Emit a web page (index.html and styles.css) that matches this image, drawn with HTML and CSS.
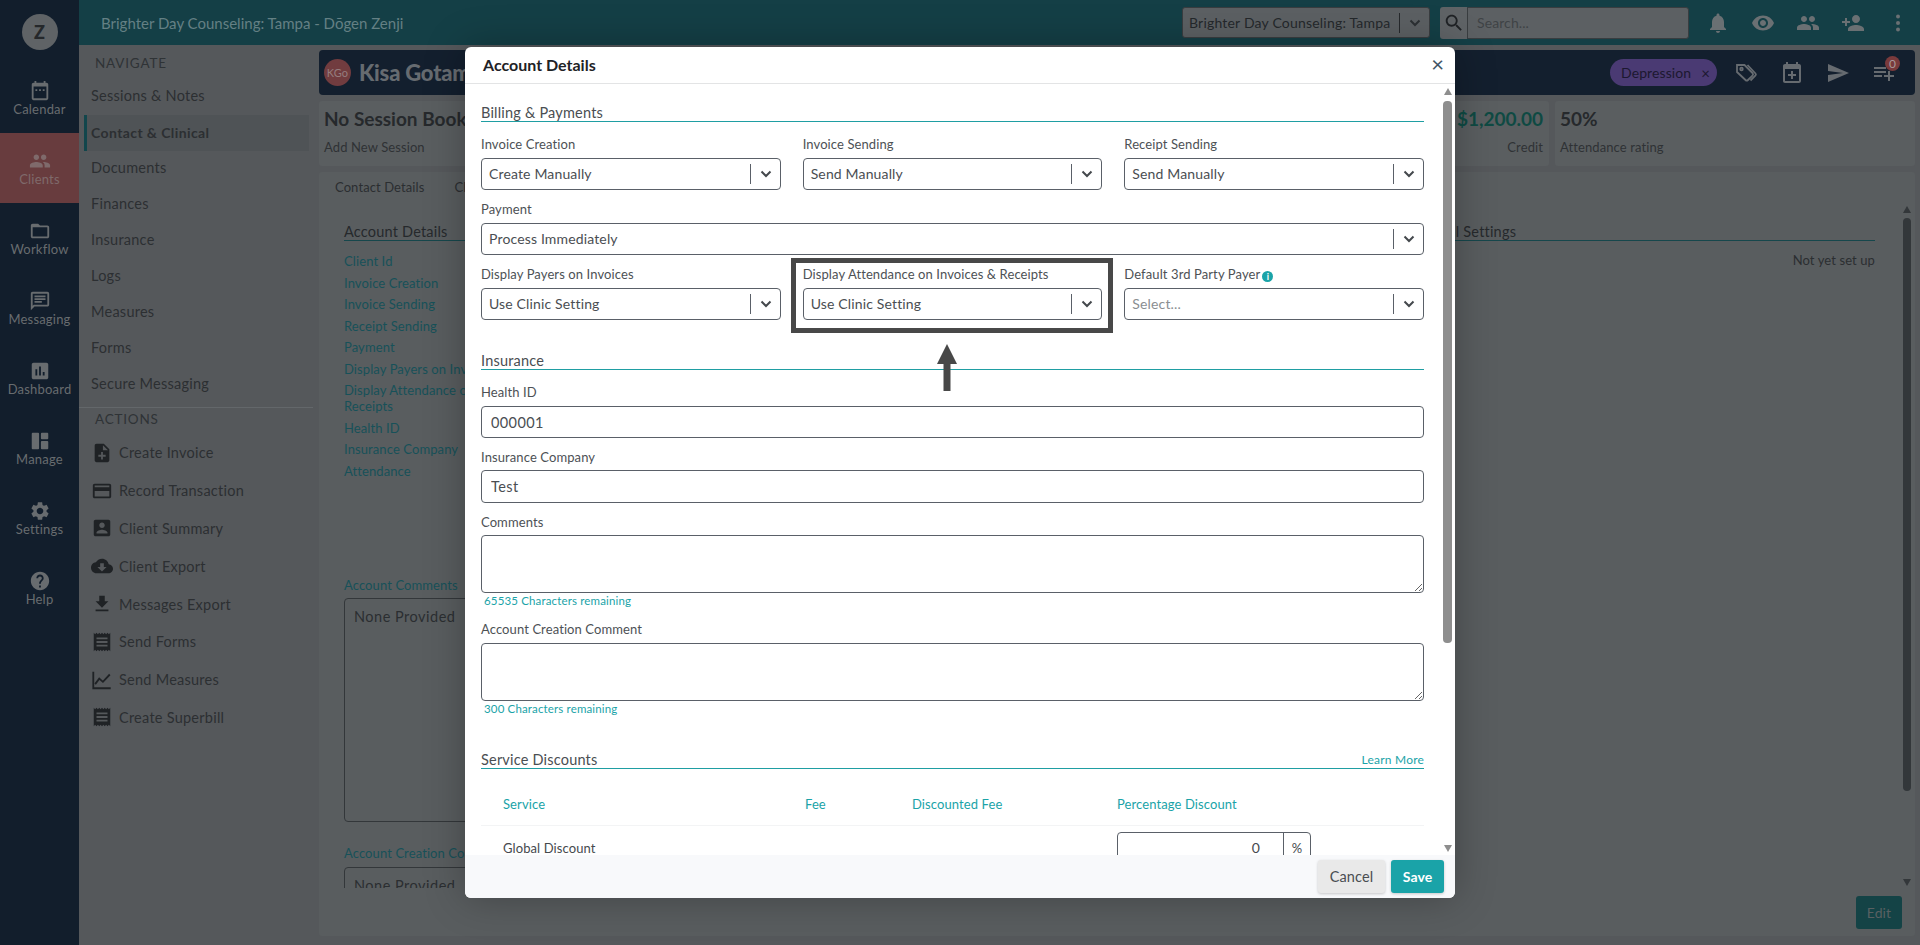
FILE: index.html
```html
<!DOCTYPE html>
<html lang="en">
<head>
<meta charset="utf-8">
<title>Account Details</title>
<link rel="stylesheet" href="styles.css">
</head>
<body>
<div class="app">
  <aside class="rail">
    <div class="rail-avatar-wrap"><div class="rail-avatar">Z</div></div>
    <a class="rail-item"><svg viewBox="0 0 24 24"><path d="M19 3h-1V1h-2v2H8V1H6v2H5c-1.1 0-2 .9-2 2v15c0 1.1.9 2 2 2h14c1.1 0 2-.9 2-2V5c0-1.1-.9-2-2-2zm0 17H5V7h14v13z"/><path d="M7 10h2v2H7zm4 0h2v2h-2zm4 0h2v2h-2z"/></svg><span>Calendar</span></a>
    <a class="rail-item rail-item-active"><svg viewBox="0 0 24 24"><path d="M16 11c1.66 0 2.99-1.34 2.99-3S17.66 5 16 5c-1.66 0-3 1.34-3 3s1.34 3 3 3zm-8 0c1.66 0 2.99-1.34 2.99-3S9.66 5 8 5C6.34 5 5 6.34 5 8s1.34 3 3 3zm0 2c-2.33 0-7 1.17-7 3.5V19h14v-2.5c0-2.33-4.67-3.5-7-3.5zm8 0c-.29 0-.62.02-.97.05 1.16.84 1.97 1.97 1.97 3.45V19h6v-2.5c0-2.33-4.67-3.5-7-3.5z"/></svg><span>Clients</span></a>
    <a class="rail-item"><svg viewBox="0 0 24 24"><path d="M20 6h-8l-2-2H4c-1.1 0-1.99.9-1.99 2L2 18c0 1.1.9 2 2 2h16c1.1 0 2-.9 2-2V8c0-1.1-.9-2-2-2zm0 12H4V8h16v10z"/></svg><span>Workflow</span></a>
    <a class="rail-item"><svg viewBox="0 0 24 24"><path d="M20 2H4c-1.1 0-1.99.9-1.99 2L2 22l4-4h14c1.1 0 2-.9 2-2V4c0-1.1-.9-2-2-2zm0 14H5.17L4 17.17V4h16v12zM6 12h8v2H6zm0-3h12v2H6zm0-3h12v2H6z"/></svg><span>Messaging</span></a>
    <a class="rail-item"><svg viewBox="0 0 24 24"><path d="M19 3H5c-1.1 0-2 .9-2 2v14c0 1.1.9 2 2 2h14c1.1 0 2-.9 2-2V5c0-1.1-.9-2-2-2zM9 17H7v-7h2v7zm4 0h-2V7h2v10zm4 0h-2v-4h2v4z"/></svg><span>Dashboard</span></a>
    <a class="rail-item"><svg viewBox="0 0 24 24"><path d="M4 3h6a1 1 0 0 1 1 1v16a1 1 0 0 1-1 1H4a1 1 0 0 1-1-1V4a1 1 0 0 1 1-1zm10 0h6a1 1 0 0 1 1 1v5a1 1 0 0 1-1 1h-6a1 1 0 0 1-1-1V4a1 1 0 0 1 1-1zm0 9h6a1 1 0 0 1 1 1v7a1 1 0 0 1-1 1h-6a1 1 0 0 1-1-1v-7a1 1 0 0 1 1-1z"/></svg><span>Manage</span></a>
    <a class="rail-item"><svg viewBox="0 0 24 24"><path d="M19.14 12.94c.04-.3.06-.61.06-.94 0-.32-.02-.64-.07-.94l2.03-1.58c.18-.14.23-.41.12-.61l-1.92-3.32c-.12-.22-.37-.29-.59-.22l-2.39.96c-.5-.38-1.03-.7-1.62-.94l-.36-2.54c-.04-.24-.24-.41-.48-.41h-3.84c-.24 0-.43.17-.47.41l-.36 2.54c-.59.24-1.13.57-1.62.94l-2.39-.96c-.22-.08-.47 0-.59.22L2.74 8.87c-.12.21-.08.47.12.61l2.03 1.58c-.05.3-.09.63-.09.94s.02.64.07.94l-2.03 1.58c-.18.14-.23.41-.12.61l1.92 3.32c.12.22.37.29.59.22l2.39-.96c.5.38 1.03.7 1.62.94l.36 2.54c.05.24.24.41.48.41h3.84c.24 0 .44-.17.47-.41l.36-2.54c.59-.24 1.13-.56 1.62-.94l2.39.96c.22.08.47 0 .59-.22l1.92-3.32c.12-.22.07-.47-.12-.61l-2.01-1.58zM12 15.6c-1.98 0-3.6-1.62-3.6-3.6s1.62-3.6 3.6-3.6 3.6 1.62 3.6 3.6-1.62 3.6-3.6 3.6z"/></svg><span>Settings</span></a>
    <a class="rail-item"><svg viewBox="0 0 24 24"><path d="M12 2C6.48 2 2 6.48 2 12s4.48 10 10 10 10-4.48 10-10S17.52 2 12 2zm1 17h-2v-2h2v2zm2.07-7.75l-.9.92C13.45 12.9 13 13.5 13 15h-2v-.5c0-1.1.45-2.1 1.17-2.83l1.24-1.26c.37-.36.59-.86.59-1.41 0-1.1-.9-2-2-2s-2 .9-2 2H8c0-2.21 1.79-4 4-4s4 1.79 4 4c0 .88-.36 1.68-.93 2.25z"/></svg><span>Help</span></a>
  </aside>

  <div class="shell">
    <header class="topbar">
      <div class="topbar-title">Brighter Day Counseling: Tampa - Dōgen Zenji</div>
      <div class="top-select"><span class="top-select-value">Brighter Day Counseling: Tampa</span><span class="top-select-sep"></span><svg class="chev chev-dim" viewBox="0 0 12 8"><path d="M1.5 1.5 6 6l4.5-4.5"/></svg></div>
      <div class="top-search">
        <span class="top-search-btn"><svg viewBox="0 0 24 24"><path d="M15.5 14h-.79l-.28-.27C15.41 12.59 16 11.11 16 9.5 16 5.91 13.09 3 9.5 3S3 5.91 3 9.5 5.91 16 9.5 16c1.61 0 3.09-.59 4.23-1.57l.27.28v.79l5 4.99L20.49 19l-4.99-5zm-6 0C7.01 14 5 11.99 5 9.5S7.01 5 9.5 5 14 7.01 14 9.5 11.99 14 9.5 14z"/></svg></span>
        <span class="top-search-input">Search...</span>
      </div>
      <div class="top-icons">
        <svg viewBox="0 0 24 24"><path d="M12 22c1.1 0 2-.9 2-2h-4c0 1.1.89 2 2 2zm6-6v-5c0-3.07-1.64-5.64-4.5-6.32V4c0-.83-.67-1.5-1.5-1.5s-1.5.67-1.5 1.5v.68C7.63 5.36 6 7.92 6 11v5l-2 2v1h16v-1l-2-2z"/></svg>
        <svg viewBox="0 0 24 24"><path d="M12 4.5C7 4.5 2.73 7.61 1 12c1.73 4.39 6 7.5 11 7.5s9.27-3.11 11-7.5c-1.73-4.39-6-7.5-11-7.5zM12 17c-2.76 0-5-2.24-5-5s2.24-5 5-5 5 2.24 5 5-2.24 5-5 5zm0-8c-1.66 0-3 1.34-3 3s1.34 3 3 3 3-1.34 3-3-1.34-3-3-3z"/></svg>
        <svg viewBox="0 0 24 24"><path d="M16 11c1.66 0 2.99-1.34 2.99-3S17.66 5 16 5c-1.66 0-3 1.34-3 3s1.34 3 3 3zm-8 0c1.66 0 2.99-1.34 2.99-3S9.66 5 8 5C6.34 5 5 6.34 5 8s1.34 3 3 3zm0 2c-2.33 0-7 1.17-7 3.5V19h14v-2.5c0-2.33-4.67-3.5-7-3.5zm8 0c-.29 0-.62.02-.97.05 1.16.84 1.97 1.97 1.97 3.45V19h6v-2.5c0-2.33-4.67-3.5-7-3.5z"/></svg>
        <svg viewBox="0 0 24 24"><path d="M15 12c2.21 0 4-1.79 4-4s-1.79-4-4-4-4 1.79-4 4 1.79 4 4 4zm-9-2V7H4v3H1v2h3v3h2v-3h3v-2H6zm9 4c-2.67 0-8 1.34-8 4v2h16v-2c0-2.66-5.33-4-8-4z"/></svg>
        <svg viewBox="0 0 24 24"><circle cx="12" cy="5.5" r="2"/><circle cx="12" cy="12" r="2"/><circle cx="12" cy="18.5" r="2"/></svg>
      </div>
    </header>

    <div class="content">
      <nav class="subnav">
        <div class="subnav-head">NAVIGATE</div>
        <ul class="subnav-list">
          <li class="subnav-link">Sessions &amp; Notes</li>
          <li class="subnav-link subnav-link-active">Contact &amp; Clinical</li>
          <li class="subnav-link">Documents</li>
          <li class="subnav-link">Finances</li>
          <li class="subnav-link">Insurance</li>
          <li class="subnav-link">Logs</li>
          <li class="subnav-link">Measures</li>
          <li class="subnav-link">Forms</li>
          <li class="subnav-link">Secure Messaging</li>
        </ul>
        <div class="subnav-divider"></div>
        <div class="subnav-head">ACTIONS</div>
        <ul class="action-list">
          <li class="action"><svg viewBox="0 0 24 24"><path d="M14 2H6c-1.1 0-1.99.9-1.99 2L4 20c0 1.1.89 2 1.99 2H18c1.1 0 2-.9 2-2V8l-6-6zm2 14h-3v3h-2v-3H8v-2h3v-3h2v3h3v2zm-3-7V3.5L18.5 9H13z"/></svg>Create Invoice</li>
          <li class="action"><svg viewBox="0 0 24 24"><path d="M20 4H4c-1.11 0-1.99.89-1.99 2L2 18c0 1.11.89 2 2 2h16c1.11 0 2-.89 2-2V6c0-1.11-.89-2-2-2zm0 14H4v-6h16v6zm0-10H4V6h16v2z"/></svg>Record Transaction</li>
          <li class="action"><svg viewBox="0 0 24 24"><path d="M3 5v14c0 1.1.89 2 2 2h14c1.1 0 2-.9 2-2V5c0-1.1-.9-2-2-2H5c-1.11 0-2 .9-2 2zm12 4c0 1.66-1.34 3-3 3s-3-1.34-3-3 1.34-3 3-3 3 1.34 3 3zm-9 8c0-2 4-3.1 6-3.1s6 1.1 6 3.1v1H6v-1z"/></svg>Client Summary</li>
          <li class="action"><svg viewBox="0 0 24 24"><path d="M19.35 10.04C18.67 6.59 15.64 4 12 4 9.11 4 6.6 5.64 5.35 8.04 2.34 8.36 0 10.91 0 14c0 3.31 2.69 6 6 6h13c2.76 0 5-2.24 5-5 0-2.64-2.05-4.78-4.65-4.96zM17 13l-5 5-5-5h3V9h4v4h3z"/></svg>Client Export</li>
          <li class="action"><svg viewBox="0 0 24 24"><path d="M19 9h-4V3H9v6H5l7 7 7-7zM5 18v2h14v-2H5z"/></svg>Messages Export</li>
          <li class="action"><svg viewBox="0 0 24 24"><path d="M18 17H6v-2h12v2zm0-4H6v-2h12v2zm0-4H6V7h12v2zM3 22l1.5-1.5L6 22l1.5-1.5L9 22l1.5-1.5L12 22l1.5-1.5L15 22l1.5-1.5L18 22l1.5-1.5L21 22V2l-1.5 1.5L18 2l-1.5 1.5L15 2l-1.5 1.5L12 2l-1.5 1.5L9 2 7.5 3.5 6 2 4.5 3.5 3 2v20z"/></svg>Send Forms</li>
          <li class="action"><svg class="action-stroke" viewBox="0 0 24 24"><path d="M2.5 3v18h19"/><path d="M4.5 16.5 9 10.5l4 3.5 7.5-8"/></svg>Send Measures</li>
          <li class="action"><svg viewBox="0 0 24 24"><path d="M18 17H6v-2h12v2zm0-4H6v-2h12v2zm0-4H6V7h12v2zM3 22l1.5-1.5L6 22l1.5-1.5L9 22l1.5-1.5L12 22l1.5-1.5L15 22l1.5-1.5L18 22l1.5-1.5L21 22V2l-1.5 1.5L18 2l-1.5 1.5L15 2l-1.5 1.5L12 2l-1.5 1.5L9 2 7.5 3.5 6 2 4.5 3.5 3 2v20z"/></svg>Create Superbill</li>
        </ul>
      </nav>

      <main class="main">
        <section class="client-bar">
          <div class="client-avatar">KGo</div>
          <div class="client-name">Kisa Gotami</div>
          <div class="client-tools">
            <span class="chip">Depression<span class="chip-x">×</span></span>
            <svg class="tool tool-line" viewBox="0 0 24 24"><path d="M3 4h7.5l8 8a1.8 1.8 0 0 1 0 2.5l-4.5 4.5a1.8 1.8 0 0 1-2.5 0l-8.5-8z"/><circle cx="7.5" cy="8" r="1.3"/><path d="M13.5 4l8 8.5a1.5 1.5 0 0 1 0 2l-5 5"/></svg>
            <svg class="tool" viewBox="0 0 24 24"><path d="M19 3h-1V1h-2v2H8V1H6v2H5c-1.11 0-2 .9-2 2v15c0 1.1.89 2 2 2h14c1.1 0 2-.9 2-2V5c0-1.1-.9-2-2-2zm0 17H5V8h14v12z"/><path d="M13 10h-2v3H8v2h3v3h2v-3h3v-2h-3z"/></svg>
            <svg class="tool" viewBox="0 0 24 24"><path d="M2.01 21 23 12 2.01 3 2 10l15 2-15 2z"/></svg>
            <span class="tool-badged">
              <svg class="tool" viewBox="0 0 24 24"><path d="M14 10H2v2h12v-2zm0-4H2v2h12V6zm4 8v-4h-2v4h-4v2h4v4h2v-4h4v-2h-4zM2 16h8v-2H2v2z"/></svg>
              <span class="badge">0</span>
            </span>
          </div>
        </section>

        <section class="stats">
          <div class="stat stat-wide">
            <div>
              <div class="stat-value">No Session Booked</div>
              <div class="stat-label">Add New Session</div>
            </div>
            <div class="stat-end">
              <div class="stat-value stat-value-money">$1,200.00</div>
              <div class="stat-label">Credit</div>
            </div>
          </div>
          <div class="stat stat-rating">
            <div>
              <div class="stat-value">50%</div>
              <div class="stat-label">Attendance rating</div>
            </div>
          </div>
        </section>

        <section class="card">
          <div class="tabs"><span>Contact Details</span><span>Clinical Details</span></div>
          <div class="card-body">
            <div>
              <h3 class="bg-title">Account Details</h3>
              <ul class="detail-list">
                <li>Client Id</li>
                <li>Invoice Creation</li>
                <li>Invoice Sending</li>
                <li>Receipt Sending</li>
                <li>Payment</li>
                <li>Display Payers on Invoices</li>
                <li>Display Attendance on Invoices &amp; Receipts</li>
                <li>Health ID</li>
                <li>Insurance Company</li>
                <li>Attendance</li>
              </ul>
              <div class="bg-label bg-label-comments">Account Comments</div>
              <div class="bg-box bg-box-tall">None Provided</div>
              <div class="bg-label bg-label-creation">Account Creation Comment</div>
              <div class="bg-box">None Provided</div>
            </div>
            <div>
              <h3 class="bg-title">Client Portal Settings</h3>
              <div class="bg-note">Not yet set up</div>
            </div>
          </div>
          <div class="card-foot"><button class="edit-btn" type="button">Edit</button></div>
          <div class="bg-scroll"><i class="arrow-up"></i><b></b><i class="arrow-down"></i></div>
        </section>
      </main>
    </div>
  </div>
</div>

<div class="modal">
  <div class="modal-head">
    <h2>Account Details</h2>
    <span class="modal-close">×</span>
  </div>
  <div class="modal-body">
    <h3 class="section-title">Billing &amp; Payments</h3>
    <div class="grid-3">
      <div class="field">
        <label>Invoice Creation</label>
        <div class="select"><span class="select-value">Create Manually</span><span class="select-sep"></span><svg class="chev" viewBox="0 0 12 8"><path d="M1.5 1.5 6 6l4.5-4.5"/></svg></div>
      </div>
      <div class="field">
        <label>Invoice Sending</label>
        <div class="select"><span class="select-value">Send Manually</span><span class="select-sep"></span><svg class="chev" viewBox="0 0 12 8"><path d="M1.5 1.5 6 6l4.5-4.5"/></svg></div>
      </div>
      <div class="field">
        <label>Receipt Sending</label>
        <div class="select"><span class="select-value">Send Manually</span><span class="select-sep"></span><svg class="chev" viewBox="0 0 12 8"><path d="M1.5 1.5 6 6l4.5-4.5"/></svg></div>
      </div>
    </div>
    <div class="field">
      <label>Payment</label>
      <div class="select"><span class="select-value">Process Immediately</span><span class="select-sep"></span><svg class="chev" viewBox="0 0 12 8"><path d="M1.5 1.5 6 6l4.5-4.5"/></svg></div>
    </div>
    <div class="grid-3">
      <div class="field">
        <label>Display Payers on Invoices</label>
        <div class="select"><span class="select-value">Use Clinic Setting</span><span class="select-sep"></span><svg class="chev" viewBox="0 0 12 8"><path d="M1.5 1.5 6 6l4.5-4.5"/></svg></div>
      </div>
      <div class="field">
        <label>Display Attendance on Invoices &amp; Receipts</label>
        <div class="select"><span class="select-value">Use Clinic Setting</span><span class="select-sep"></span><svg class="chev" viewBox="0 0 12 8"><path d="M1.5 1.5 6 6l4.5-4.5"/></svg></div>
      </div>
      <div class="field">
        <label>Default 3rd Party Payer<span class="info">i</span></label>
        <div class="select"><span class="select-value select-placeholder">Select...</span><span class="select-sep"></span><svg class="chev" viewBox="0 0 12 8"><path d="M1.5 1.5 6 6l4.5-4.5"/></svg></div>
      </div>
    </div>

    <h3 class="section-title section-title-insurance">Insurance</h3>
    <div class="field">
      <label>Health ID</label>
      <input class="text-input" type="text" value="000001">
    </div>
    <div class="field field-tight">
      <label>Insurance Company</label>
      <input class="text-input text-input-tall" type="text" value="Test">
    </div>
    <div class="field field-tight">
      <label>Comments</label>
      <textarea class="text-area"></textarea>
      <div class="remaining">65535 Characters remaining</div>
    </div>
    <div class="field field-after-note">
      <label>Account Creation Comment</label>
      <textarea class="text-area"></textarea>
      <div class="remaining">300 Characters remaining</div>
    </div>

    <div class="section-title section-title-discounts">
      <h3>Service Discounts</h3>
      <a class="learn-more">Learn More</a>
    </div>
    <div class="discount-row discount-head">
      <span>Service</span><span>Fee</span><span>Discounted Fee</span><span>Percentage Discount</span>
    </div>
    <div class="discount-row discount-item">
      <span>Global Discount</span><span></span><span></span>
      <div class="percent"><span class="percent-value">0</span><span class="percent-unit">%</span></div>
    </div>
  </div>
  <div class="modal-foot">
    <button class="btn btn-cancel" type="button">Cancel</button>
    <button class="btn btn-save" type="button">Save</button>
  </div>
  <div class="modal-scroll"><i class="arrow-up"></i><b></b><i class="arrow-down"></i></div>
  <div class="highlight"></div>
  <svg class="pointer" viewBox="0 0 20 47"><path d="M10 0 20 20H13.5V47H6.5V20H0z"/></svg>
</div>
</body>
</html>
```

FILE: styles.css
```css
* { box-sizing: border-box; }
html, body { margin: 0; height: 100%; overflow: hidden; }
body {
  font-family: "Lato", "Liberation Sans", sans-serif;
  font-size: 14px;
  letter-spacing: .1px;
  color: #2d3033;
  background: #55585b;
}
h2, h3, ul { margin: 0; padding: 0; font-weight: 400; }
ul { list-style: none; }
button { font: inherit; letter-spacing: inherit; border: 0; cursor: pointer; }

.app { display: flex; height: 945px; }

/* rail */
.rail { flex: 0 0 79px; background: #121e2c; }
.rail-avatar-wrap { height: 63px; padding-top: 14px; }
.rail-avatar {
  width: 36px; height: 36px; margin: 0 auto; border-radius: 50%;
  background: #5f6366; color: #25282b;
  font-size: 18px; font-weight: 900; line-height: 36px; text-align: center;
}
.rail-item {
  display: flex; flex-direction: column; align-items: center;
  height: 70px; padding-top: 17px;
  color: #686c6f; font-size: 13px; line-height: 16px; letter-spacing: .2px;
}
.rail-item svg { width: 22px; height: 22px; fill: #686c6f; margin-bottom: -1px; }
.rail-item-active { background: #683c3e; color: #7f6a6b; }
.rail-item-active svg { fill: #7f6a6b; }

.shell { flex: 1; min-width: 0; display: flex; flex-direction: column; }

/* topbar */
.topbar { flex: 0 0 45px; display: flex; align-items: center; background: #143f46; padding-left: 22px; }
.topbar-title { flex: 1; font-size: 15px; letter-spacing: 0; color: #648084; }
.top-select {
  display: flex; align-items: center; width: 248px; height: 31px; margin-right: 10px;
  background: #5c6063; border: 1px solid #393d40; border-radius: 3px; padding-left: 6px;
}
.top-select-value { flex: 1; font-size: 14px; letter-spacing: .2px; color: #24282b; white-space: nowrap; }
.top-select-sep { width: 1px; height: 20px; background: #26292c; }
.chev { flex: none; width: 12px; height: 8px; margin: 0 8px 0 9px; fill: none; stroke: #44484c; stroke-width: 2; }
.chev-dim { stroke: #2c3033; }
.top-search { display: flex; height: 32px; margin-right: 17px; }
.top-search-btn {
  width: 27px; background: #5f6366; border-radius: 3px 0 0 3px;
  display: flex; align-items: center; justify-content: center;
}
.top-search-btn svg { width: 22px; height: 22px; fill: #1f2225; }
.top-search-input {
  width: 222px; background: #5c6063; border: 1px solid #393d40; border-radius: 0 3px 3px 0;
  padding: 6px 9px; font-size: 14px; color: #3f4346;
}
.top-icons { display: flex; align-items: center; gap: 21px; padding-right: 10px; }
.top-icons svg { width: 24px; height: 24px; fill: #6a7073; }

/* subnav */
.content { flex: 1; display: flex; min-height: 0; }
.subnav { flex: 0 0 240px; padding-top: 9px; }
.subnav-head { height: 18px; line-height: 18px; padding-left: 16px; font-size: 13.5px; letter-spacing: .8px; color: #2f3336; }
.subnav-list { margin: 7px 0 4px 5px; width: 225px; }
.subnav-link {
  height: 36px; line-height: 34px; padding-left: 7px;
  font-size: 14.5px; letter-spacing: .25px; color: #2c2f32;
}
.subnav-link-active {
  line-height: 36px;
  background: #4f5356; border-left: 3px solid #12464c; padding-left: 4px;
  font-weight: 700; font-size: 14px; letter-spacing: .4px;
}
.subnav-divider { width: 234px; border-top: 1px solid #63676a; margin-bottom: 2px; }
.action-list { margin-top: 6px; }
.action {
  display: flex; align-items: center; height: 37.8px; padding-left: 12px; gap: 6px;
  font-size: 14.5px; letter-spacing: .25px; color: #2c2f32;
}
.action svg { flex: none; width: 22px; height: 22px; fill: #1f2225; }
.action .action-stroke { fill: none; stroke: #1f2225; stroke-width: 2; }

/* main */
.main { flex: 1; min-width: 0; display: flex; flex-direction: column; padding: 5px 5px 9px 0; gap: 6px; }
.client-bar {
  flex: 0 0 45px; display: flex; align-items: center; padding: 0 19px 0 5px;
  background: #131f2e; border-radius: 4px;
}
.client-avatar {
  width: 27px; height: 27px; border-radius: 50%; background: #713c3f; color: #957d7e;
  font-size: 11px; line-height: 27px; text-align: center;
}
.client-name { flex: 1; margin-left: 8px; font-size: 22px; font-weight: 900; color: #666b70; letter-spacing: -.2px; }
.client-tools { display: flex; align-items: center; }
.chip {
  display: flex; align-items: center; justify-content: space-between;
  width: 107px; height: 27px; padding: 0 7px 0 11px; margin-right: 17px;
  border-radius: 14px; background: #4a3a73; color: #1c1830; font-size: 14px;
}
.chip-x { font-size: 15px; }
.tool { width: 24px; height: 24px; fill: #666b70; margin-right: 22px; display: block; }
.tool-line { fill: none; stroke: #666b70; stroke-width: 1.8; }
.tool-badged { position: relative; }
.tool-badged .tool { margin-right: 0; }
.badge {
  position: absolute; left: 13px; top: -5px; width: 15px; height: 15px; border-radius: 50%;
  background: #7a3a3c; color: #a89899; font-size: 12px; line-height: 15px; text-align: center; letter-spacing: 0;
}

.stats { flex: 0 0 65px; display: flex; gap: 6px; }
.stat { padding: 3px 6px 0 5px; background: #5a5e60; border-radius: 3px; }
.stat-wide { flex: 1; display: flex; justify-content: space-between; }
.stat-rating { flex: 0 0 360px; }
.stat-value { font-size: 19px; line-height: 30px; font-weight: 700; color: #26292c; letter-spacing: 0; }
.stat-value-money { color: #0f4a43; }
.stat-label { font-size: 13px; line-height: 20px; margin-top: 3px; color: #2f3235; }
.stat-end { text-align: right; }

.card {
  position: relative; flex: 1; min-height: 0; display: flex; flex-direction: column;
  background: #595d5f; border-radius: 3px;
}
.tabs { display: flex; gap: 30px; padding: 6px 0 0 16px; height: 24px; font-size: 13px; line-height: 18px; color: #2b2e31; }
.card-body { flex: 1; min-height: 0; overflow: hidden; display: grid; grid-template-columns: 1fr 497px; gap: 20px; padding: 27px 40px 0 25px; }
.bg-title { height: 18px; line-height: 18px; font-size: 14.5px; letter-spacing: .2px; color: #26292c; border-bottom: 1px solid #16474c; }
.detail-list { width: 200px; margin-top: 12px; }
.detail-list li { width: fit-content; font-size: 13px; line-height: 16px; margin-bottom: 5.5px; color: #175159; }
.bg-label { font-size: 13px; line-height: 16px; color: #175159; margin-bottom: 5px; }
.bg-label-comments { margin-top: 98px; }
.bg-label-creation { margin-top: 23px; margin-bottom: 6px; }
.bg-box { height: 100px; border: 1px solid #33373a; border-radius: 4px; padding: 9px; font-size: 14.5px; line-height: 18px; letter-spacing: .5px; color: #2b2e31; }
.bg-box-tall { height: 224px; }
.bg-note { margin-top: 10px; text-align: right; font-size: 13px; line-height: 18px; color: #2b2e31; }
.card-foot { flex: 0 0 48px; display: flex; justify-content: flex-end; padding: 8px 13px 0 0; }
.edit-btn { width: 46px; height: 33px; border-radius: 3px; background: #144346; color: #596062; font-size: 14px; }
.bg-scroll { position: absolute; right: 4px; top: 34px; bottom: 50px; width: 8px; display: flex; flex-direction: column; align-items: center; }
.bg-scroll b { flex: 1; width: 8px; margin: 5px 0 88px; background: #33373a; border-radius: 4px; }
.bg-scroll .arrow-up { border-bottom-color: #33373a; }
.bg-scroll .arrow-down { border-top-color: #33373a; }
.arrow-up, .arrow-down { flex: none; width: 0; height: 0; border-left: 4.5px solid transparent; border-right: 4.5px solid transparent; }
.arrow-up { border-bottom: 7px solid #8e8e8e; }
.arrow-down { border-top: 7px solid #8e8e8e; }

/* modal */
.modal {
  position: absolute; left: 465px; top: 47px; width: 990px; height: 851px;
  display: flex; flex-direction: column; overflow: hidden;
  background: #fff; border-radius: 6px;
  box-shadow: 0 0 40px rgba(0,0,0,.28);
  color: #45494d;
}
.modal-head { flex: 0 0 37px; display: flex; align-items: center; justify-content: space-between; padding: 0 11px 2px 18px; border-bottom: 1px solid #e3e4e5; }
.modal-head h2 { font-size: 16px; font-weight: 700; letter-spacing: 0; color: #1e2226; }
.modal-close { font-size: 22px; line-height: 24px; color: #3f5566; }
.modal-body { flex: 1; min-height: 0; overflow: hidden; padding: 18px 31px 0 16px; }
.section-title { height: 20px; font-size: 14.5px; line-height: 21px; letter-spacing: .2px; color: #4a4e52; border-bottom: 1px solid #1f9ea3; margin-bottom: 3px; }
.section-title-insurance { margin-top: 30px; }
.section-title-discounts { display: flex; justify-content: space-between; margin-top: 32px; margin-bottom: 0; }
.section-title-discounts h3 { font-size: 14.5px; }
.learn-more { font-size: 12px; color: #1aa3a8; letter-spacing: .2px; line-height: 21px; }
.grid-3 { display: grid; grid-template-columns: repeat(3, 1fr); gap: 22px; }
.field { padding-top: 10px; min-width: 0; }
.field label { display: block; height: 18px; margin-bottom: 5px; font-size: 13px; line-height: 18px; letter-spacing: .1px; color: #4d5155; white-space: nowrap; }
.field-tight label { margin-bottom: 4px; }
.field-after-note { padding-top: 11px; }
.select {
  display: flex; align-items: center; height: 32px; padding-left: 7px;
  border: 1px solid #5a6068; border-radius: 4px; background: #fff;
}
.select-value { flex: 1; padding-bottom: 2px; font-size: 14px; letter-spacing: .15px; color: #4a4e52; white-space: nowrap; }
.select-placeholder { color: #8a8e92; }
.select-sep { width: 1px; height: 20px; background: #5a6068; }
.info {
  display: inline-block; width: 11px; height: 11px; margin-left: 2px; vertical-align: -1px;
  border-radius: 50%; background: #1aa3a8; color: #fff;
  font-size: 9px; font-weight: 700; line-height: 11px; text-align: center; letter-spacing: 0;
}
.text-input, .text-area {
  display: block; width: 100%; margin: 0; border: 1px solid #5a6068; border-radius: 4px; background: #fff;
  font: inherit; font-size: 14.5px; letter-spacing: .4px; color: #4a4e52; outline: 0;
}
.text-input { height: 32px; padding: 0 9px; }
.text-input-tall { height: 33px; }
.text-area { height: 58px; }
.remaining { height: 16px; padding-left: 3px; font-size: 11.5px; line-height: 16px; letter-spacing: .15px; color: #1aa3a8; }
.discount-row { display: grid; grid-template-columns: 302px 107px 205px 194px; padding-left: 22px; }
.discount-head { height: 57px; padding-top: 26px; border-bottom: 1px solid #f3f4f5; font-size: 13px; line-height: 18px; color: #1aa3a8; }
.discount-item { padding-top: 6px; font-size: 13px; }
.discount-item > span { line-height: 32px; color: #45494d; }
.percent { display: flex; height: 32px; border: 1px solid #5a6068; border-radius: 4px; }
.percent-value { flex: 1; padding-right: 23px; text-align: right; font-size: 14px; line-height: 30px; }
.percent-unit { width: 27px; border-left: 1px solid #5a6068; text-align: center; font-size: 13px; line-height: 30px; }
.modal-foot { flex: 0 0 43px; display: flex; justify-content: flex-end; align-items: center; gap: 6px; padding-right: 11px; background: #f8f9fb; }
.btn { height: 33px; border-radius: 3px; font-size: 14.5px; box-shadow: 0 1px 3px rgba(0,0,0,.2); }
.btn-cancel { width: 67px; background: #e9e9e9; color: #4a4e52; }
.btn-save { width: 53px; background: #1aa3a8; color: #fff; font-weight: 700; font-size: 14px; }
.modal-scroll { position: absolute; left: 978px; top: 41px; width: 9px; height: 764px; display: flex; flex-direction: column; align-items: center; }
.modal-scroll b { width: 9px; height: 542px; margin-top: 6px; background: #8e8e8e; border-radius: 4px; }
.modal-scroll .arrow-down { margin-top: auto; }
.highlight { position: absolute; left: 326px; top: 211px; width: 322px; height: 75px; border: 5px solid #484848; pointer-events: none; }
.pointer { position: absolute; left: 472px; top: 297px; width: 20px; height: 47px; fill: #484848; }
```
